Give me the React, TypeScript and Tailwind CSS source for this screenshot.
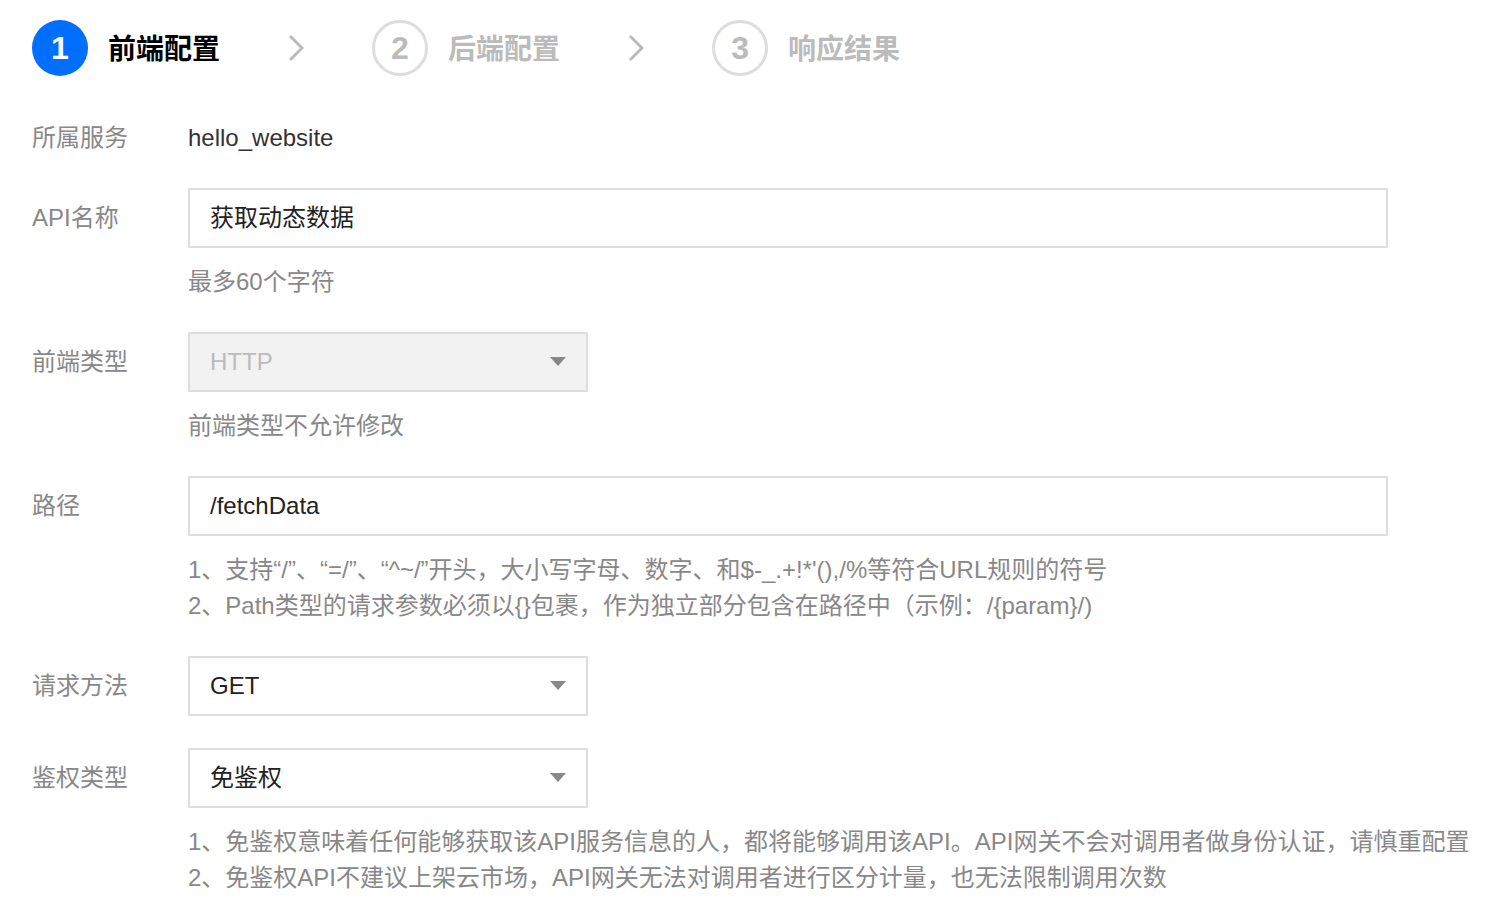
import React from 'react';

type Step = { no: number; title: string; active?: boolean };

const STEPS: Step[] = [
    { no: 1, title: '前端配置', active: true },
    { no: 2, title: '后端配置' },
    { no: 3, title: '响应结果' },
];

function Chevron() {
    return (
        <svg width="16" height="28" viewBox="0 0 16 28" className="mx-[68px] shrink-0">
            <path d="M2 2 L14 14 L2 26" fill="none" stroke="#bbbbbb" strokeWidth="3" />
        </svg>
    );
}

function Caret() {
    return (
        <svg width="16" height="10" viewBox="0 0 16 10" className="shrink-0">
            <path d="M0 0 L16 0 L8 9 Z" fill="#888888" />
        </svg>
    );
}

// one label + control row
function FormItem({
    label,
    tall = true,
    children,
}: {
    label: string;
    tall?: boolean;
    children: React.ReactNode;
}) {
    return (
        <div className="flex">
            <div
                className={`w-[156px] shrink-0 flex items-center text-[24px] text-[#888888] ${
                    tall ? 'h-[60px]' : 'h-[36px]'
                }`}
            >
                {label}
            </div>
            <div className="flex flex-col">{children}</div>
        </div>
    );
}

function Help({ lines }: { lines: string[] }) {
    return (
        <div className="mt-4 text-[24px] leading-[36px] text-[#888888] whitespace-nowrap">
            {lines.map((l) => (
                <div key={l}>{l}</div>
            ))}
        </div>
    );
}

function SelectBox({ value, disabled }: { value: string; disabled?: boolean }) {
    return (
        <div
            className={`w-[400px] h-[60px] border-2 border-[#dddddd] flex items-center justify-between pl-5 pr-[20px] text-[24px] ${
                disabled ? 'bg-[#f2f2f2] text-[#bbbbbb]' : 'bg-white text-[#222222]'
            }`}
        >
            <span>{value}</span>
            <Caret />
        </div>
    );
}

function TextBox({ value }: { value: string }) {
    return (
        <div className="w-[1200px] h-[60px] border-2 border-[#dddddd] bg-white flex items-center pl-5 text-[24px] text-[#222222]">
            {value}
        </div>
    );
}

export default function App() {
    return (
        <div className="min-h-screen bg-white font-['Liberation_Sans','Noto_Sans_CJK_SC',sans-serif] pl-8 pt-5">
            {/* Steps */}
            <div className="flex items-center">
                {STEPS.map((s, i) => (
                    <React.Fragment key={s.no}>
                        <div className="flex items-center">
                            <div
                                className={`w-14 h-14 rounded-full flex items-center justify-center text-[32px] font-bold ${
                                    s.active
                                        ? 'bg-[#006eff] text-white'
                                        : 'border-[3px] border-[#dddddd] text-[#bbbbbb]'
                                }`}
                            >
                                {s.no}
                            </div>
                            <span
                                className={`ml-5 pt-1 text-[28px] font-bold ${
                                    s.active ? 'text-black' : 'text-[#bbbbbb]'
                                }`}
                            >
                                {s.title}
                            </span>
                        </div>
                        {i < STEPS.length - 1 && <Chevron />}
                    </React.Fragment>
                ))}
            </div>

            {/* Form */}
            <div className="mt-11 flex flex-col gap-8">
                <FormItem label="所属服务" tall={false}>
                    <div className="h-[36px] flex items-center text-[24px] text-[#333333]">hello_website</div>
                </FormItem>

                <FormItem label="API名称">
                    <TextBox value="获取动态数据" />
                    <Help lines={['最多60个字符']} />
                </FormItem>

                <FormItem label="前端类型">
                    <SelectBox value="HTTP" disabled />
                    <Help lines={['前端类型不允许修改']} />
                </FormItem>

                <FormItem label="路径">
                    <TextBox value="/fetchData" />
                    <Help
                        lines={[
                            '1、支持“/”、“=/”、“^~/”开头，大小写字母、数字、和$-_.+!*\'(),/%等符合URL规则的符号',
                            '2、Path类型的请求参数必须以{}包裹，作为独立部分包含在路径中（示例：/{param}/)',
                        ]}
                    />
                </FormItem>

                <FormItem label="请求方法">
                    <SelectBox value="GET" />
                </FormItem>

                <FormItem label="鉴权类型">
                    <SelectBox value="免鉴权" />
                    <Help
                        lines={[
                            '1、免鉴权意味着任何能够获取该API服务信息的人，都将能够调用该API。API网关不会对调用者做身份认证，请慎重配置',
                            '2、免鉴权API不建议上架云市场，API网关无法对调用者进行区分计量，也无法限制调用次数',
                        ]}
                    />
                </FormItem>
            </div>
        </div>
    );
}
